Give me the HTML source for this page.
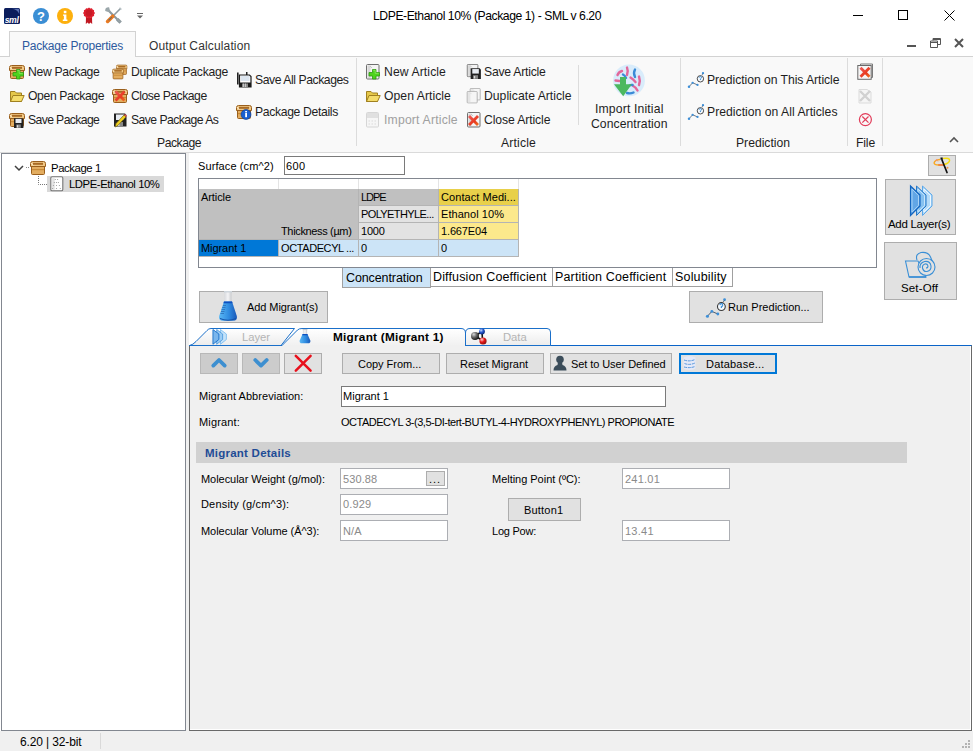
<!DOCTYPE html>
<html><head><meta charset="utf-8"><style>
*{margin:0;padding:0;box-sizing:border-box}
html,body{width:973px;height:751px;overflow:hidden}
body{position:relative;background:#fff;font-family:"Liberation Sans",sans-serif;font-size:12px;color:#000}
.a{position:absolute}
.t{position:absolute;white-space:nowrap;line-height:16px;height:16px}
.rb{color:#1e1e1e;font-size:12.2px}
.c{font-size:11px}
svg{position:absolute;overflow:visible}
.btn{position:absolute;background:#e1e1e1;border:1px solid #adadad}
.tb{position:absolute;background:#fff;border:1px solid #7a7a7a}
.sep{position:absolute;width:1px;background:#dcdcdc}
</style></head><body>

<svg width="0" height="0" style="position:absolute;left:0;top:0">
<defs>
 <symbol id="box" viewBox="0 0 16 16">
  <rect x="1.5" y="6" width="13" height="8.5" rx="1" fill="#e3ad60" stroke="#9a5f1c" stroke-width="1"/>
  <rect x="2" y="9" width="12" height="1.2" fill="#c88a38"/>
  <path d="M0.5 3.5 Q0.5 1.5 2.5 1.5 H13.5 Q15.5 1.5 15.5 3.5 V6.5 H0.5Z" fill="#f0c886" stroke="#9a5f1c" stroke-width="1"/>
  <rect x="3" y="2.8" width="10" height="2" fill="#a86a24"/>
  <path d="M1 3 L3 5.5" stroke="#fff3d8" stroke-width=".8"/>
 </symbol>
 <symbol id="folder" viewBox="0 0 16 16">
  <path d="M1.5 3.5 H6 L7.5 5 H12.5 V13.5 H1.5Z" fill="#e6c84a" stroke="#a08020"/>
  <path d="M4 7.5 H15.2 L12.5 13.5 H1.5Z" fill="#f4dc6a" stroke="#a08020"/>
 </symbol>
 <symbol id="floppy" viewBox="0 0 16 16">
  <path d="M2 1.5 H13 L14.5 3 V14.5 H2Z" fill="#222"/>
  <rect x="4" y="2.5" width="8" height="5.5" fill="#e8ecf2"/>
  <rect x="5" y="10" width="6" height="4.5" fill="#888"/>
  <rect x="6" y="11" width="1.5" height="3" fill="#ddd"/>
 </symbol>
 <symbol id="page" viewBox="0 0 16 16">
  <rect x="1.5" y="0.5" width="12.5" height="14.5" rx="1" fill="#f4f4f4" stroke="#6e6e6e"/>
  <rect x="2.5" y="1.5" width="3" height="12.5" fill="#d8d8d8"/>
  <path d="M5 2 L7 4" stroke="#bbb" stroke-width=".8"/>
 </symbol>
 <symbol id="plus" viewBox="0 0 16 16">
  <path d="M7.5 5.5 H11 V8.5 H14.5 V12 H11 V15 H7.5 V12 H4 V8.5 H7.5Z" fill="#4fd41e" stroke="#2e9a10" stroke-width="0.8"/>
  <path d="M8.3 6.3 H10.2 V9.3 H13.7" stroke="#a8f080" stroke-width=".6" fill="none"/>
 </symbol>
 <symbol id="redx" viewBox="0 0 16 16">
  <path d="M2.5 4.5 L4.5 2.5 L8 6 L11.5 2.5 L13.5 4.5 L10 8 L13.5 11.5 L11.5 13.5 L8 10 L4.5 13.5 L2.5 11.5 L6 8Z" fill="#e8412c" stroke="#b8281a" stroke-width="0.6"/>
 </symbol>
 <symbol id="pred" viewBox="0 0 18 18">
  <path d="M2 15.7 L5.6 11.8 L10.5 13.9" stroke="#4a5868" stroke-width=".8" fill="none"/>
  <circle cx="2" cy="15.7" r="1.25" fill="#3d8fd8"/><circle cx="5.6" cy="11.8" r="1.15" fill="#3d8fd8"/><circle cx="10.5" cy="13.9" r="1.15" fill="#3d8fd8"/>
  <circle cx="13.4" cy="7.8" r="3.2" fill="#f4f8fc" stroke="#3a3a3a" stroke-width=".9"/>
  <path d="M12.2 6.6 Q12.4 5.4 13.5 5.5 Q14.7 5.7 14.4 6.9 Q14.1 7.6 13.4 8 V9" stroke="#3d8fd8" stroke-width="1" fill="none"/>
  <circle cx="16" cy="2.2" r="1.15" fill="#3d8fd8"/>
  <path d="M15 4 L15.8 2.8" stroke="#4a5868" stroke-width=".7"/>
 </symbol>
</defs></svg>
<!-- ===== TITLE BAR ===== -->
<div class="a" style="left:0;top:0;width:973px;height:57px;background:#fff"></div>
<!-- sml logo -->
<svg style="left:4px;top:8px" width="16" height="16" viewBox="0 0 16 16">
 <rect x="0" y="0" width="16" height="16" rx="1.5" fill="#0b1d5c"/>
 <path d="M8 0.8 Q13 1 15.2 6 V2 Q15.2 0.8 14 0.8Z" fill="#5a70b0"/>
 <text x="7.6" y="14.6" font-family="Liberation Sans" font-size="8.6" font-style="italic" font-weight="bold" fill="#fff" text-anchor="middle" letter-spacing="-.3">sml</text>
</svg>
<!-- help -->
<svg style="left:33px;top:8px" width="16" height="16" viewBox="0 0 16 16">
 <circle cx="8" cy="8" r="8" fill="#3a8ed4"/>
 <text x="8" y="12.8" font-family="Liberation Sans" font-size="13" font-weight="bold" fill="#fff" text-anchor="middle">?</text>
</svg>
<!-- info -->
<svg style="left:57px;top:8px" width="16" height="16" viewBox="0 0 16 16">
 <circle cx="8" cy="8" r="8" fill="#fdb00d"/>
 <path d="M6 6.5 H9.4 V11.6 H10.4 V13 H5.8 V11.6 H6.9 V7.8 H6Z" fill="#fff"/>
 <rect x="6.8" y="2.8" width="2.6" height="2.4" fill="#fff"/>
</svg>
<!-- ribbon award -->
<svg style="left:82px;top:7px" width="14" height="18" viewBox="0 0 14 18">
 <path d="M4 10 L3.8 17 L5.6 15.6 L7 17 L7 11Z M10 10 L10.2 17 L8.4 15.6 L7 17 L7 11Z" fill="#c01822"/>
 <path d="M7 0.6 L8.3 1.5 L9.9 1.2 L10.6 2.6 L12.1 3.2 L12 4.8 L13 6.1 L12 7.4 L12.1 9 L10.6 9.6 L9.9 11 L8.3 10.7 L7 11.6 L5.7 10.7 L4.1 11 L3.4 9.6 L1.9 9 L2 7.4 L1 6.1 L2 4.8 L1.9 3.2 L3.4 2.6 L4.1 1.2 L5.7 1.5Z" fill="#dd1f2d"/>
 <circle cx="7" cy="6.1" r="3.3" fill="#c81a26"/>
</svg>
<!-- tools -->
<svg style="left:105px;top:7px" width="17" height="17" viewBox="0 0 17 17">
 <path d="M3.5 3.5 L13.5 13.5" stroke="#8d999e" stroke-width="2.2"/>
 <path d="M1 3.5 Q1 1 3.5 1 L4 3 L3 4 L1 3.5Z M2 1.5 L5.5 5" stroke="#9aa6aa" stroke-width="1.6" fill="#b8c2c6"/>
 <path d="M13 11.5 L16 14.5 L14.5 16 L11.5 13" fill="#9aa6aa" stroke="#8d999e" stroke-width="1.2"/>
 <path d="M15.5 1.5 L8 9" stroke="#8d999e" stroke-width="1.6"/>
 <path d="M14.5 0.8 L16.3 2.6" stroke="#b8c2c6" stroke-width="1.6"/>
 <path d="M7.8 9.2 L2.6 14.4" stroke="#e87a22" stroke-width="3.6" stroke-linecap="round"/>
 <path d="M6.8 10.2 L3.6 13.4" stroke="#6a6a6a" stroke-width="1.1"/>
</svg>
<svg style="left:137px;top:13px" width="6" height="6" viewBox="0 0 6 6">
 <rect x="0" y="0" width="6" height="1" fill="#666"/>
 <path d="M0 2.5 L6 2.5 L3 5.5Z" fill="#666"/>
</svg>
<div class="t" style="left:373px;top:8px;font-size:12.2px;color:#000;letter-spacing:-0.442px">LDPE-Ethanol 10% (Package 1) - SML v 6.20</div>
<!-- window controls -->
<div class="a" style="left:853px;top:15px;width:10px;height:1px;background:#000"></div>
<div class="a" style="left:898px;top:10px;width:10px;height:10px;border:1px solid #000"></div>
<svg style="left:944px;top:10px" width="11" height="11" viewBox="0 0 11 11"><path d="M0.5 0.5 L10.5 10.5 M10.5 0.5 L0.5 10.5" stroke="#000" stroke-width="1"/></svg>

<!-- ===== TAB ROW ===== -->
<div class="a" style="left:0;top:56px;width:973px;height:1px;background:#d2d2d2"></div>
<div class="a" style="left:9px;top:31px;width:127px;height:26px;background:#f9f9f9;border:1px solid #d2d2d2;border-bottom:none"></div>
<div class="t" style="left:22px;top:38px;font-size:12px;color:#2d5a9e;letter-spacing:-0.207px">Package Properties</div>
<div class="t" style="left:149px;top:38px;font-size:12px;color:#333;letter-spacing:0.143px">Output Calculation</div>
<!-- mdi controls -->
<div class="a" style="left:907px;top:45px;width:9px;height:2px;background:#555"></div>
<svg style="left:930px;top:38px" width="11" height="10" viewBox="0 0 11 10"><path d="M3 2.5 V0.5 H10.5 V6.5 H8 M0.5 3 H7.5 V9.5 H0.5Z M0.5 4.5 H7.5 M3 1.5 H10.5" stroke="#555" fill="none" stroke-width="1"/></svg>
<svg style="left:954px;top:38px" width="10" height="10" viewBox="0 0 10 10"><path d="M1 1 L9 9 M9 1 L1 9" stroke="#555" stroke-width="2"/></svg>

<!-- ===== RIBBON BODY ===== -->
<div class="a" style="left:0;top:57px;width:973px;height:95px;background:#f9f9f9"></div>
<div class="a" style="left:0;top:152px;width:973px;height:1px;background:#dadada"></div>
<div class="sep" style="left:356px;top:58px;height:88px"></div>
<div class="sep" style="left:680px;top:58px;height:88px"></div>
<div class="sep" style="left:847px;top:58px;height:88px"></div>
<div class="sep" style="left:882px;top:58px;height:88px"></div>
<div class="sep" style="left:578px;top:65px;height:60px"></div>

<div class="t rb" style="left:157px;top:135px;letter-spacing:-0.491px">Package</div>
<div class="t rb" style="left:501px;top:135px;letter-spacing:0.163px">Article</div>
<div class="t rb" style="left:736px;top:135px;letter-spacing:-0.020px">Prediction</div>
<div class="t rb" style="left:856px;top:135px;letter-spacing:-0.160px">File</div>


<!-- Package group -->
<svg style="left:9px;top:64px" width="16" height="16"><use href="#box"/><use href="#plus"/></svg>
<div class="t rb" style="left:28px;top:64px;letter-spacing:-0.336px">New Package</div>
<svg style="left:9px;top:88px" width="16" height="16"><use href="#folder"/></svg>
<div class="t rb" style="left:28px;top:88px;letter-spacing:-0.370px">Open Package</div>
<svg style="left:9px;top:112px" width="16" height="16"><use href="#box"/><g transform="translate(3.5,5) scale(0.75)"><use href="#floppy" width="16" height="16"/></g></svg>
<div class="t rb" style="left:28px;top:112px;letter-spacing:-0.609px">Save Package</div>
<svg style="left:112px;top:64px" width="16" height="16"><g transform="translate(4,0) scale(.72)"><use href="#box" width="16" height="16"/></g><g transform="translate(0,4) scale(.75)"><use href="#box" width="16" height="16"/></g></svg>
<div class="t rb" style="left:131px;top:64px;letter-spacing:-0.272px">Duplicate Package</div>
<svg style="left:112px;top:88px" width="16" height="16"><use href="#box"/><path d="M2.5 4.5 L4.5 2.5 L8 6 L11.5 2.5 L13.5 4.5 L10 8 L13.5 11.5 L11.5 13.5 L8 10 L4.5 13.5 L2.5 11.5 L6 8Z" fill="url(#rxg)"/></svg>
<div class="t rb" style="left:131px;top:88px;letter-spacing:-0.483px">Close Package</div>
<svg style="left:112px;top:112px" width="16" height="16"><use href="#floppy"/><path d="M3 15 L4 11.5 L12 3 L14 5 L5.5 13.8Z" fill="#f0d020" stroke="#6a5a10" stroke-width=".7"/><path d="M12 3 L13 2 L15 4 L14 5Z" fill="#e05050"/></svg>
<div class="t rb" style="left:131px;top:112px;letter-spacing:-0.549px">Save Package As</div>
<svg style="left:236px;top:71px" width="17" height="17" viewBox="0 0 17 17">
 <rect x="1" y="1.5" width="1.6" height="12" fill="#222"/>
 <rect x="10" y="1" width="1.5" height="3" fill="#222"/>
 <path d="M3.5 4 H13.5 L15 5.5 V16 H3.5Z" fill="#fdfdfd" stroke="#1a1a1a" stroke-width="1.2"/>
 <rect x="5" y="5" width="8.5" height="5" fill="#dde6f0"/>
 <rect x="3.5" y="11.5" width="11.5" height="4.5" fill="#1a1a1a"/>
 <rect x="6" y="12.5" width="6" height="3.5" fill="#8a8a8a"/>
 <path d="M7.5 12.5 V16 M9.5 12.5 V16" stroke="#ddd" stroke-width=".7"/>
</svg>
<div class="t rb" style="left:255px;top:72px;letter-spacing:-0.439px">Save All Packages</div>
<svg style="left:236px;top:104px" width="16" height="16"><use href="#box"/><circle cx="10" cy="10.5" r="5" fill="#1a5fd0" stroke="#0d3a8a" stroke-width=".6"/><rect x="9.2" y="9" width="1.8" height="4.2" fill="#fff"/><rect x="9.2" y="7" width="1.8" height="1.4" fill="#fff"/></svg>
<div class="t rb" style="left:255px;top:104px;letter-spacing:-0.338px">Package Details</div>

<!-- Article group -->
<svg style="left:365px;top:64px" width="16" height="16"><use href="#page"/><use href="#plus"/></svg>
<div class="t rb" style="left:384px;top:64px;letter-spacing:0.094px">New Article</div>
<svg style="left:365px;top:88px" width="16" height="16"><use href="#folder"/></svg>
<div class="t rb" style="left:384px;top:88px;letter-spacing:0.042px">Open Article</div>
<svg style="left:365px;top:112px" width="16" height="16" opacity=".3"><rect x="1.5" y="0.5" width="12" height="14.5" rx="1" fill="#f0f0f0" stroke="#888"/><rect x="2" y="1" width="11" height="5" fill="#aaa"/><path d="M3.5 9 H12 M3.5 12 H12" stroke="#999" stroke-dasharray="1.5 1.5"/></svg>
<div class="t rb" style="left:384px;top:112px;color:#a0a0a0;letter-spacing:0.191px">Import Article</div>
<svg style="left:466px;top:64px" width="16" height="17"><g transform="scale(.85)"><use href="#page" width="16" height="16"/></g><g transform="translate(3,3) scale(.82)"><use href="#floppy" width="16" height="16"/></g></svg>
<div class="t rb" style="left:484px;top:64px;letter-spacing:-0.230px">Save Article</div>
<svg style="left:466px;top:88px" width="16" height="16" opacity=".6"><g transform="translate(3,0) scale(.8)"><use href="#page" width="16" height="16"/></g><g transform="translate(0,3) scale(.8)"><use href="#page" width="16" height="16"/></g></svg>
<div class="t rb" style="left:484px;top:88px;letter-spacing:0.012px">Duplicate Article</div>
<svg style="left:466px;top:112px" width="16" height="16"><use href="#page"/><path d="M2.5 4.5 L4.5 2.5 L8 6 L11.5 2.5 L13.5 4.5 L10 8 L13.5 11.5 L11.5 13.5 L8 10 L4.5 13.5 L2.5 11.5 L6 8Z" fill="url(#rxg)" transform="translate(-0.5,0.5)"/></svg>
<div class="t rb" style="left:484px;top:112px;letter-spacing:-0.103px">Close Article</div>

<!-- Import initial concentration -->
<svg style="left:613px;top:64px" width="32" height="34" viewBox="0 0 32 34">
 <circle cx="16" cy="16.4" r="15.9" fill="#d9ecfb"/>
 <g stroke-linecap="round" stroke-width="2.4" fill="none">
  <path d="M4.5 11 Q5.5 8 9 7" stroke="#e2679a"/>
  <path d="M14 3.5 Q15.5 7 14 11" stroke="#e2679a"/>
  <path d="M22 5.5 Q20 9 22 13" stroke="#3a8ad6"/>
  <path d="M10 10.5 Q12 11.5 13 14" stroke="#3a8ad6"/>
  <path d="M17.5 13.5 Q20 15 22.5 18" stroke="#e2679a"/>
  <path d="M26 12.5 Q27.5 16.5 26 21" stroke="#e2679a"/>
  <path d="M19.5 21.5 Q22.5 23 24.5 26.5" stroke="#e2679a"/>
  <path d="M14 29 Q17.5 30 20.5 28.5" stroke="#3a8ad6"/>
  <path d="M2.5 16.5 L6.5 17" stroke="#e2679a"/>
  <path d="M16.5 21.5 Q18 20.5 19.5 21" stroke="#3a8ad6"/>
 </g>
 <path d="M7 13 H13 V20.3 H18.8 L10.2 32.3 L1 20.3 H7Z" fill="#4cb860"/>
</svg>
<div class="t rb" style="left:595px;top:101px;letter-spacing:0.151px">Import Initial</div>
<div class="t rb" style="left:591px;top:116px;letter-spacing:0.047px">Concentration</div>

<!-- Prediction group -->
<svg style="left:687px;top:71px" width="18" height="18"><use href="#pred"/></svg>
<div class="t rb" style="left:707px;top:72px;letter-spacing:-0.054px">Prediction on This Article</div>
<svg style="left:687px;top:103px" width="18" height="18"><use href="#pred"/></svg>
<div class="t rb" style="left:707px;top:104px;letter-spacing:0.017px">Prediction on All Articles</div>

<!-- File group -->
<svg style="left:857px;top:63px" width="17" height="17" viewBox="0 0 17 17">
 <defs><linearGradient id="rxg" x1="0" y1="0" x2="1" y2="1"><stop offset="0" stop-color="#f06060"/><stop offset=".6" stop-color="#e83a20"/><stop offset="1" stop-color="#f07a20"/></linearGradient></defs>
 <path d="M3.5 2.5 V1 H15.5 V14.5 H14" fill="none" stroke="#7a7a7a" stroke-width="1"/>
 <rect x="0.8" y="2.5" width="13.4" height="13.8" fill="#f6f6f6" stroke="#6a6a6a" stroke-width="1"/>
 <path d="M2.5 4.5 L4.5 2.5 L8 6 L11.5 2.5 L13.5 4.5 L10 8 L13.5 11.5 L11.5 13.5 L8 10 L4.5 13.5 L2.5 11.5 L6 8Z" fill="url(#rxg)" transform="translate(0,1.2)"/>
</svg>
<svg style="left:857px;top:88px" width="16" height="16" viewBox="0 0 16 16" opacity=".3">
 <path d="M2 1.5 H10 L14 4 V15 H2Z" fill="#eee" stroke="#999"/>
 <path d="M3 3 L13 13 M13 3 L3 13" stroke="#777" stroke-width="2.4"/>
</svg>
<svg style="left:857px;top:112px" width="16" height="16" viewBox="0 0 16 16"><circle cx="8.4" cy="7.6" r="6" fill="none" stroke="#e23d5a" stroke-width="1.2"/><path d="M5.3 4.5 L11.5 10.7 M11.5 4.5 L5.3 10.7" stroke="#e23d5a" stroke-width="1.2"/></svg>
<svg style="left:949px;top:137px" width="10" height="6"><path d="M1 5 L5 1 L9 5" stroke="#555" stroke-width="1.6" fill="none"/></svg>


<!-- ===== MAIN ===== -->
<div class="a" style="left:0;top:153px;width:973px;height:578px;background:#fff"></div>
<div class="a" style="left:186px;top:153px;width:3px;height:578px;background:#f0f0f0"></div>
<div class="a" style="left:1px;top:153px;width:185px;height:578px;border:1px solid #828790;background:#fff"></div>


<svg style="left:14px;top:165px" width="10" height="6"><path d="M1 1 L5 5 L9 1" stroke="#404040" stroke-width="1.5" fill="none"/></svg>
<svg style="left:26px;top:167px" width="4" height="1"><path d="M0 0.5 H4" stroke="#888" stroke-dasharray="1 1"/></svg>
<svg style="left:30px;top:160px" width="16" height="16"><use href="#box"/></svg>
<div class="t c" style="left:51px;top:160px;font-size:11.3px;letter-spacing:-0.399px">Package 1</div>
<svg style="left:38px;top:176px" width="11" height="10"><path d="M0.5 0 V8.5 H10" stroke="#777" stroke-dasharray="1 1" fill="none"/></svg>
<div class="a" style="left:47px;top:176px;width:117px;height:16px;background:#d9d9d9"></div>
<svg style="left:50px;top:176px" width="14" height="16" viewBox="0 0 14 16">
 <rect x="0.8" y="0.8" width="12" height="14" rx="1.3" fill="#fff" stroke="#747474" stroke-width="1.1"/>
 <rect x="2.2" y="2.2" width="2.5" height="11.5" fill="#e2e2e2"/>
 <g fill="#9a9a9a"><circle cx="5.3" cy="3.5" r=".6"/><circle cx="7.6" cy="3.5" r=".6"/>
 <circle cx="4.3" cy="6.5" r=".6"/><circle cx="6.5" cy="6.5" r=".6"/><circle cx="8.4" cy="6.5" r=".6"/>
 <circle cx="3.4" cy="9.5" r=".6"/><circle cx="6.5" cy="9.5" r=".6"/><circle cx="9.4" cy="9.5" r=".6"/>
 <circle cx="2.6" cy="12.5" r=".6"/><circle cx="6.5" cy="12.5" r=".6"/><circle cx="10.3" cy="12.5" r=".6"/></g>
</svg>
<div class="t c" style="left:69px;top:176px;font-size:11.3px;letter-spacing:-0.428px">LDPE-Ethanol 10%</div>



<div class="t c" style="left:198px;top:158px;font-size:11px;letter-spacing:0.104px">Surface (cm^2)</div>
<div class="tb" style="left:284px;top:156px;width:121px;height:19px;border-color:#7a7a7a"></div>
<div class="t c" style="left:286px;top:158px;font-size:11px;letter-spacing:0.380px">600</div>

<!-- grid -->
<div class="a" style="left:198px;top:178px;width:679px;height:90px;border:1px solid #828790;background:#fff"></div>
<div class="a" style="left:278px;top:179px;width:1px;height:10px;background:#e4e4e4"></div>
<div class="a" style="left:358px;top:179px;width:1px;height:10px;background:#e4e4e4"></div>
<div class="a" style="left:438px;top:179px;width:1px;height:10px;background:#e4e4e4"></div>
<div class="a" style="left:518px;top:179px;width:1px;height:10px;background:#e4e4e4"></div>
<div class="a" style="left:199px;top:189px;width:160px;height:50px;background:#c0c0c0"></div>
<div class="a" style="left:358px;top:189px;width:80px;height:17px;background:#c0c0c0"></div>
<div class="a" style="left:358px;top:206px;width:80px;height:33px;background:#e2e2e2"></div>
<div class="a" style="left:438px;top:189px;width:81px;height:17px;background:#e8d04a"></div>
<div class="a" style="left:438px;top:206px;width:81px;height:33px;background:#fce98c"></div>
<div class="a" style="left:199px;top:239px;width:80px;height:17px;background:#0078d7"></div>
<div class="a" style="left:279px;top:239px;width:240px;height:17px;background:#cce4f7"></div>
<!-- grid lines -->
<div class="a" style="left:358px;top:205px;width:161px;height:1px;background:#b4b4b4"></div>
<div class="a" style="left:358px;top:222px;width:161px;height:1px;background:#b4b4b4"></div>
<div class="a" style="left:199px;top:239px;width:320px;height:1px;background:#b4b4b4"></div>
<div class="a" style="left:199px;top:256px;width:320px;height:1px;background:#b4b4b4"></div>
<div class="a" style="left:358px;top:189px;width:1px;height:67px;background:#b4b4b4"></div>
<div class="a" style="left:438px;top:189px;width:1px;height:67px;background:#b4b4b4"></div>
<div class="a" style="left:518px;top:189px;width:1px;height:67px;background:#b4b4b4"></div>
<div class="a" style="left:278px;top:239px;width:1px;height:17px;background:#b4b4b4"></div>
<div class="t c" style="left:201px;top:189px;letter-spacing:-0.082px">Article</div>
<div class="t c" style="left:361px;top:189px;letter-spacing:-1.062px">LDPE</div>
<div class="t c" style="left:441px;top:189px;letter-spacing:0.068px">Contact Medi...</div>
<div class="t c" style="left:361px;top:206px;letter-spacing:-0.608px">POLYETHYLE...</div>
<div class="t c" style="left:441px;top:206px;letter-spacing:0.055px">Ethanol 10%</div>
<div class="t c" style="left:281px;top:223px;letter-spacing:-0.350px">Thickness (µm)</div>
<div class="t c" style="left:361px;top:223px;letter-spacing:-0.193px">1000</div>
<div class="t c" style="left:441px;top:223px;letter-spacing:-0.139px">1.667E04</div>
<div class="t c" style="left:201px;top:240px;letter-spacing:-0.073px">Migrant 1</div>
<div class="t c" style="left:281px;top:240px;letter-spacing:-0.403px">OCTADECYL ...</div>
<div class="t c" style="left:361px;top:240px">0</div>
<div class="t c" style="left:441px;top:240px">0</div>

<!-- result tabs -->
<div class="a" style="left:342px;top:268px;width:89px;height:20px;background:#cce4f7;border:1px solid #a0a0a0;border-top:none"></div>
<div class="a" style="left:430px;top:268px;width:303px;height:19px;background:#fff;border:1px solid #a0a0a0;border-top:none"></div>
<div class="a" style="left:552px;top:268px;width:1px;height:19px;background:#a0a0a0"></div>
<div class="a" style="left:672px;top:268px;width:1px;height:19px;background:#a0a0a0"></div>
<div class="t" style="left:346px;top:270px;font-size:12.5px;letter-spacing:-0.102px">Concentration</div>
<div class="t" style="left:433px;top:269px;font-size:12.5px;letter-spacing:0.137px">Diffusion Coefficient</div>
<div class="t" style="left:555px;top:269px;font-size:12.5px;letter-spacing:0.149px">Partition Coefficient</div>
<div class="t" style="left:675px;top:269px;font-size:12.5px;letter-spacing:0.177px">Solubility</div>

<!-- buttons -->
<div class="btn" style="left:199px;top:291px;width:129px;height:32px"></div>
<svg style="left:218px;top:291px" width="20" height="31" viewBox="0 0 20 31">
 <defs>
  <linearGradient id="fg1" x1="0" y1="0" x2="1" y2="0"><stop offset="0" stop-color="#5ab8f5"/><stop offset=".55" stop-color="#2f8be0"/><stop offset="1" stop-color="#1a58b8"/></linearGradient>
  <linearGradient id="ng1" x1="0" y1="0" x2="1" y2="0"><stop offset="0" stop-color="#d8dade"/><stop offset=".5" stop-color="#f4f4f6"/><stop offset="1" stop-color="#c8cacd"/></linearGradient>
 </defs>
 <rect x="6" y="0" width="8" height="2" fill="#cfd6dc"/>
 <rect x="6.5" y="1.5" width="7" height="9.5" fill="url(#ng1)"/>
 <path d="M6 10.5 H14 L18.8 25 Q19.8 29.5 15 29.8 H5 Q0.2 29.5 1.2 25Z" fill="url(#fg1)"/>
 <path d="M6 10.5 H14 L14.6 12.3 H5.4Z" fill="#0d4fc0"/>
 <path d="M5 14.5 H8 M4.2 16.5 H7.5 M3.6 18.5 H7 M3 20.5 H6.5 M2.5 22.5 H6" stroke="#2a6fb8" stroke-width=".8"/>
 <path d="M2 27.5 Q10 31 18 27.5" fill="none" stroke="#1450a8" stroke-width="1"/>
</svg>
<div class="t c" style="left:247px;top:299px;font-size:11px;letter-spacing:-0.081px">Add Migrant(s)</div>

<div class="btn" style="left:689px;top:291px;width:134px;height:32px"></div>
<svg style="left:705px;top:297px" width="22" height="22" viewBox="0 0 18 18"><use href="#pred"/></svg>
<div class="t c" style="left:728px;top:299px;font-size:11px;letter-spacing:0.022px">Run Prediction...</div>

<div class="btn" style="left:928px;top:155px;width:28px;height:21px"></div>
<svg style="left:930px;top:156px" width="24" height="19" viewBox="0 0 24 19">
 <path d="M9 9 Q3.5 9 4.2 6.5 Q5 4 10 3.5" fill="none" stroke="#f8a820" stroke-width="1.4"/>
 <path d="M13 2.5 Q20 1.5 19.6 4.5 Q19 7.5 13 8.8" fill="none" stroke="#f6dc10" stroke-width="1.4"/>
 <path d="M8.5 9 H14" stroke="#f25c0c" stroke-width="1.4"/>
 <path d="M12 4 L17 16.5" stroke="#111" stroke-width="1.7" stroke-linecap="round"/>
 <rect x="10.5" y="1.5" width="2.2" height="2.2" fill="#111"/>
 <path d="M6 3 L8 5.5 M5.5 5.5 L7.5 3" stroke="#f39070" stroke-width=".8"/>
 <circle cx="17.5" cy="11.8" r="1" fill="#f39040"/>
</svg>
<div class="btn" style="left:885px;top:179px;width:71px;height:56px"></div>
<svg style="left:909px;top:185px" width="24" height="32" viewBox="0 0 24 32">
 <path d="M13.5 1 L23 10 V21 L13.5 30.5Z" fill="#b5dbf8" stroke="#5aa8ea" stroke-width="1"/>
 <path d="M15 4 L21.5 10.6 V20.4 L15 27Z" fill="none" stroke="#eef8ff" stroke-width="1"/>
 <path d="M7.5 1 L17 10 V21 L7.5 30.5Z" fill="#86c1f0" stroke="#2a7ac8" stroke-width="1"/>
 <path d="M9 4 L15.5 10.6 V20.4 L9 27Z" fill="none" stroke="#c8e6fc" stroke-width="1"/>
 <path d="M1.5 1 L11 10 V21 L1.5 30.5Z" fill="#62a6e6" stroke="#1466c0" stroke-width="1.2"/>
 <path d="M3 4 L9.5 10.6 V20.4 L3 27Z" fill="none" stroke="#a8d2f6" stroke-width="1"/>
</svg>
<div class="t c" style="left:888px;top:216px;font-size:11.5px;letter-spacing:-0.303px">Add Layer(s)</div>
<div class="btn" style="left:884px;top:242px;width:73px;height:58px"></div>
<svg style="left:904px;top:251px" width="32" height="28" viewBox="0 0 32 28">
 <path d="M1.5 10 H14 L22 26 H5Z" fill="none" stroke="#3a8fd6" stroke-width="1.1"/>
 <path d="M13 9 Q11 3 17 1.5 Q24 0.5 26.5 6 L29 12" fill="none" stroke="#3a8fd6" stroke-width="1.1"/>
 <circle cx="22.5" cy="16" r="8.5" fill="#e1e1e1" stroke="#3a8fd6" stroke-width="1.1"/>
 <path d="M22 17 Q24 17 24 15 Q23.5 12.5 21 13 Q18 14 18.5 17 Q19.5 21 23 20.5 Q27.5 19.5 27 15 Q26 9.5 20.5 10.5 Q15.5 12 16 17" fill="none" stroke="#3a8fd6" stroke-width="1.1"/>
 <path d="M5 26 H22" stroke="#3a8fd6" stroke-width="1.6"/>
</svg>
<div class="t c" style="left:901px;top:280px;font-size:11.5px;letter-spacing:0.140px">Set-Off</div>


<!-- LOWER PANEL -->
<div class="a" style="left:189px;top:345px;width:783px;height:386px;background:#f0f0f0;border:1px solid #696969;border-top:1px solid #0a64c8;box-shadow:inset -1px -1px 0 #fff"></div>
<!-- tab strip -->
<svg style="left:189px;top:328px" width="370" height="19" viewBox="0 0 370 19">
 <defs><linearGradient id="tg" x1="0" y1="0" x2="0" y2="1"><stop offset="0" stop-color="#ffffff"/><stop offset="1" stop-color="#ececec"/></linearGradient>
 <linearGradient id="tga" x1="0" y1="0" x2="0" y2="1"><stop offset="0" stop-color="#ffffff"/><stop offset="1" stop-color="#f0f0f0"/></linearGradient></defs>
 <path d="M0.5 17.5 Q4 16.8 7 13.5 L18 2.5 Q19.5 0.5 22 0.5 H105.5 L92 17.5Z" fill="url(#tg)" stroke="#1a6fc9" stroke-width="1"/>
 <path d="M276.5 5 Q276.5 0.5 281 0.5 H358 Q361.5 0.5 361.5 4 V17.5 H276.5Z" fill="url(#tg)" stroke="#1a6fc9" stroke-width="1"/>
 <path d="M93 17.5 L108.5 2 Q110 0.5 113 0.5 H272 Q276.5 0.5 276.5 5 V18" fill="url(#tga)" stroke="#1a6fc9" stroke-width="1"/>
 <rect x="93.5" y="17" width="182.5" height="3" fill="#f0f0f0"/>
</svg>
<div class="a" style="left:189px;top:345px;width:93px;height:1px;background:#1a6fc9"></div>
<svg style="left:212px;top:329px" width="15" height="16" viewBox="0 0 24 32" preserveAspectRatio="none">
 <path d="M13.5 1 L23 10 V21 L13.5 30.5Z" fill="#c5e3fa" stroke="#6ab4ee" stroke-width="1.3"/>
 <path d="M7.5 1 L17 10 V21 L7.5 30.5Z" fill="#9ccdf4" stroke="#3d8fd8" stroke-width="1.3"/>
 <path d="M1.5 1 L11 10 V21 L1.5 30.5Z" fill="#7ab6ec" stroke="#1a6fc9" stroke-width="1.6"/>
</svg>
<div class="t c" style="left:242px;top:329px;color:#b4b4b4;font-size:11.3px;letter-spacing:-0.092px">Layer</div>
<svg style="left:299px;top:329px" width="12" height="15" viewBox="0 0 20 25">
 <rect x="6" y="0" width="8" height="2" fill="#c0c8d0"/>
 <rect x="6.5" y="1.5" width="7" height="7" fill="url(#ng1)"/>
 <path d="M6 8.5 H14 L18.8 19 Q19.8 23.5 15 23.8 H5 Q0.2 23.5 1.2 19Z" fill="url(#fg1)"/>
 <path d="M6 8.5 H14 L14.6 10.3 H5.4Z" fill="#0d4fc0"/>
</svg>
<div class="t" style="left:333px;top:329px;font-weight:bold;font-size:11.8px;letter-spacing:0.233px">Migrant (Migrant 1)</div>
<svg style="left:470px;top:328px" width="18" height="18" viewBox="0 0 18 18">
 <defs>
  <radialGradient id="mg" cx=".35" cy=".3" r=".7"><stop offset="0" stop-color="#d8d8d8"/><stop offset=".5" stop-color="#6a6a6a"/><stop offset="1" stop-color="#1a1a1a"/></radialGradient>
  <radialGradient id="mb" cx=".35" cy=".3" r=".7"><stop offset="0" stop-color="#c8dcff"/><stop offset=".5" stop-color="#2a5ad0"/><stop offset="1" stop-color="#0a2a80"/></radialGradient>
  <radialGradient id="mr" cx=".35" cy=".3" r=".7"><stop offset="0" stop-color="#ffd0d0"/><stop offset=".5" stop-color="#e81818"/><stop offset="1" stop-color="#901010"/></radialGradient>
 </defs>
 <path d="M5 8 L12 3.5 L12.5 12.5 Z" stroke="#111" stroke-width="1.6" fill="none"/>
 <circle cx="5" cy="8" r="4" fill="url(#mg)"/>
 <circle cx="12" cy="3.5" r="2.9" fill="url(#mb)"/>
 <circle cx="13" cy="13" r="3.6" fill="url(#mr)"/>
</svg>
<div class="t c" style="left:503px;top:329px;color:#b4b4b4;font-size:11.3px;letter-spacing:-0.067px">Data</div>

<!-- action buttons -->
<div class="btn" style="left:200px;top:353px;width:38px;height:21px;background:#cccccc;border-color:#b8b8b8"></div>
<svg style="left:211px;top:358px" width="16" height="10"><path d="M2.3 7.6 L8 2 L13.7 7.6" stroke="#3d8fd0" stroke-width="3.8" fill="none" stroke-linecap="round" stroke-linejoin="round"/></svg>
<div class="btn" style="left:242px;top:353px;width:38px;height:21px;background:#cccccc;border-color:#b8b8b8"></div>
<svg style="left:253px;top:358px" width="16" height="10"><path d="M2.3 2 L8 7.6 L13.7 2" stroke="#3d8fd0" stroke-width="3.8" fill="none" stroke-linecap="round" stroke-linejoin="round"/></svg>
<div class="btn" style="left:284px;top:353px;width:38px;height:21px"></div>
<svg style="left:294px;top:354px" width="18" height="18"><path d="M1.8 1.8 L16.6 16.6 M16.6 1.8 L1.8 16.6" stroke="#e8101c" stroke-width="2.5" stroke-linecap="round"/></svg>
<div class="btn" style="left:342px;top:353px;width:98px;height:21px"></div>
<div class="t c" style="left:358px;top:356px;letter-spacing:-0.023px">Copy From...</div>
<div class="btn" style="left:446px;top:353px;width:98px;height:21px"></div>
<div class="t c" style="left:460px;top:356px;letter-spacing:-0.037px">Reset Migrant</div>
<div class="btn" style="left:550px;top:353px;width:122px;height:21px"></div>
<svg style="left:553px;top:355px" width="14" height="16" viewBox="0 0 14 16"><circle cx="7" cy="4.5" r="3.8" fill="#3b4d5a"/><path d="M5 7 H9 L9.5 10 Q13.5 11 13.5 15.5 H0.5 Q0.5 11 4.5 10Z" fill="#3b4d5a"/></svg>
<div class="t c" style="left:571px;top:356px;letter-spacing:-0.079px">Set to User Defined</div>
<div class="btn" style="left:679px;top:353px;width:98px;height:21px;border:2px solid #0078d7"></div>
<svg style="left:683px;top:355px" width="13" height="16" viewBox="0 0 13 16">
 <path d="M0.5 2.5 Q6.5 -0.5 12.5 2.5 V13.5 Q6.5 16.5 0.5 13.5Z" fill="#e4e9f8"/>
 <path d="M1 5 Q6.5 7 12 4.5 M1.5 8.5 Q6.5 10.5 12 8 M1 12 Q6.5 13.5 12 11.5" stroke="#4a90d8" stroke-width=".9" fill="none" stroke-dasharray="3 .8"/>
</svg>
<div class="t c" style="left:706px;top:356px;letter-spacing:0.203px">Database...</div>

<div class="t c" style="left:199px;top:388px;letter-spacing:0.050px">Migrant Abbreviation:</div>
<div class="tb" style="left:341px;top:386px;width:325px;height:21px"></div>
<div class="t c" style="left:343px;top:388px;letter-spacing:0.016px">Migrant 1</div>
<div class="t c" style="left:199px;top:414px;letter-spacing:0.158px">Migrant:</div>
<div class="t c" style="left:341px;top:414px;letter-spacing:-0.483px">OCTADECYL 3-(3,5-DI-tert-BUTYL-4-HYDROXYPHENYL) PROPIONATE</div>

<!-- details -->
<div class="a" style="left:196px;top:442px;width:711px;height:21px;background:#d1d1d1"></div>
<div class="t" style="left:205px;top:445px;font-weight:bold;font-size:11.5px;color:#1f4c96;letter-spacing:0.237px">Migrant Details</div>

<div class="t c" style="left:201px;top:471px;letter-spacing:-0.045px">Molecular Weight (g/mol):</div>
<div class="tb" style="left:340px;top:468px;width:108px;height:21px;border-color:#acaeb3"></div>
<div class="t c" style="left:343px;top:471px;color:#8a8a8a;letter-spacing:0.108px">530.88</div>
<div class="btn" style="left:426px;top:471px;width:19px;height:15px"></div>
<div class="t c" style="left:429px;top:471px;font-size:11px;letter-spacing:1px">...</div>
<div class="t c" style="left:201px;top:496px;letter-spacing:0.180px">Density (g/cm^3):</div>
<div class="tb" style="left:340px;top:494px;width:108px;height:21px;border-color:#acaeb3"></div>
<div class="t c" style="left:343px;top:496px;color:#8a8a8a;letter-spacing:0.155px">0.929</div>
<div class="t c" style="left:201px;top:523px;letter-spacing:-0.052px">Molecular Volume (Å^3):</div>
<div class="tb" style="left:340px;top:520px;width:108px;height:21px;border-color:#acaeb3"></div>
<div class="t c" style="left:343px;top:523px;color:#8a8a8a;letter-spacing:0.087px">N/A</div>

<div class="t c" style="left:492px;top:471px;letter-spacing:-0.026px">Melting Point (ºC):</div>
<div class="tb" style="left:622px;top:468px;width:108px;height:21px;border-color:#acaeb3"></div>
<div class="t c" style="left:625px;top:471px;color:#8a8a8a;letter-spacing:0.224px">241.01</div>
<div class="btn" style="left:508px;top:498px;width:73px;height:23px"></div>
<div class="t c" style="left:524px;top:502px;letter-spacing:0.195px">Button1</div>
<div class="t c" style="left:492px;top:523px;letter-spacing:-0.234px">Log Pow:</div>
<div class="tb" style="left:622px;top:520px;width:108px;height:21px;border-color:#acaeb3"></div>
<div class="t c" style="left:625px;top:523px;color:#8a8a8a;letter-spacing:0.255px">13.41</div>


<!-- ===== STATUS BAR ===== -->
<div class="a" style="left:0;top:731px;width:973px;height:20px;background:#f0f0f0"></div>
<div class="t c" style="left:20px;top:734px;font-size:12px;letter-spacing:-0.128px">6.20 | 32-bit</div>
<div class="a" style="left:100px;top:733px;width:1px;height:16px;background:#d9d9d9"></div>

<svg style="left:960px;top:738px" width="12" height="12"><g fill="#b3b3b3"><rect x="8" y="2" width="2" height="2"/><rect x="5" y="5" width="2" height="2"/><rect x="8" y="5" width="2" height="2"/><rect x="2" y="8" width="2" height="2"/><rect x="5" y="8" width="2" height="2"/><rect x="8" y="8" width="2" height="2"/></g></svg>
</body></html>
